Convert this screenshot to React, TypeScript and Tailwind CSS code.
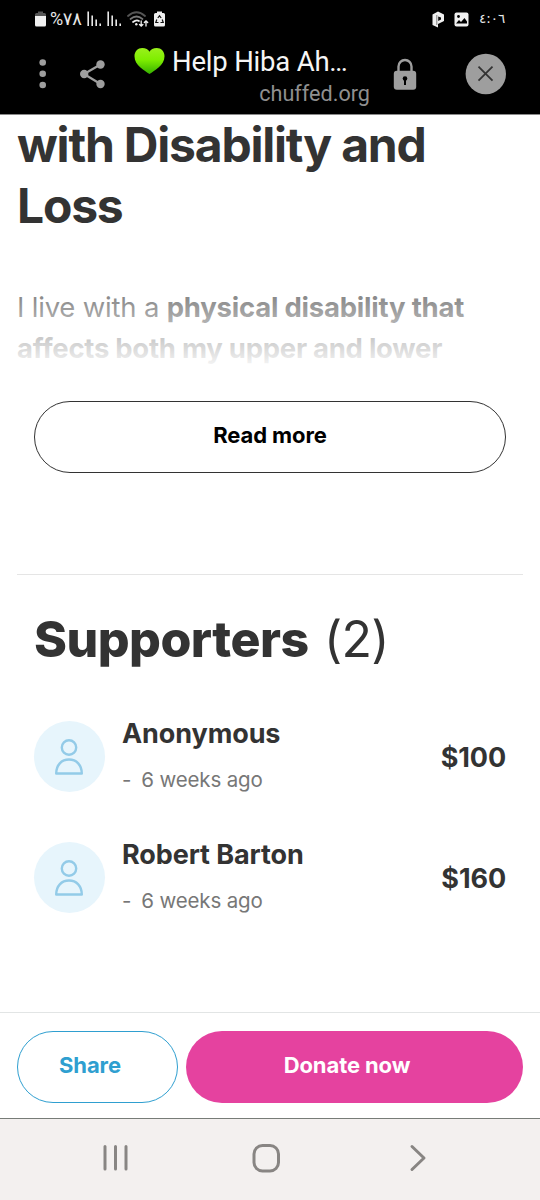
const SUPPORTERS = [
  { name: "Anonymous", when: "6 weeks ago", amount: "$100" },
  { name: "Robert Barton", when: "6 weeks ago", amount: "$160" },
];

function SignalIcon() {
  return (
    <svg width="15" height="16" viewBox="0 0 15 16" stroke="#e8e8e8" strokeWidth="1.6">
      <path d="M1.2 0.5V15M5.2 4.5V15M9.2 8.5V15M13.2 12.500V15" />
    </svg>
  );
}

function StatusBar() {
  return (
    <div className="flex h-[38px] items-center justify-between pr-[36px] pl-[35px] text-[#e8e8e8]">
      <div className="flex items-center">
        <svg width="11" height="16" viewBox="0 0 11 16">
          <path d="M3 0.500h5V2h1.500Q11 2 11 3.500V6H0V3.500Q0 2 1.500 2H3z" fill="#555" />
          <path d="M0 5h11v9q0 1.500-1.500 1.500h-8Q0 15.500 0 14z" fill="#f0f0f0" />
        </svg>
        <span className="ml-[4px] flex w-[31px] items-center font-[Roboto,'DejaVu_Sans',sans-serif] text-[18px] leading-none whitespace-nowrap">
          <span className="tracking-[-0.5px]">%</span>
          <span className="text-[18px] tracking-[-1px]">٧٨</span>
        </span>
        <div className="ml-[6px] flex gap-[5px]">
          <SignalIcon />
          <SignalIcon />
        </div>
        <svg className="ml-[5px]" width="22" height="17" viewBox="0 0 22 17" fill="none" strokeLinecap="round">
          <path d="M1 5Q9.500-2.500 18 5" stroke="#555" strokeWidth="1.800" />
          <path d="M3.500 8Q9.500 3 15.500 8" stroke="#777" strokeWidth="1.700" />
          <path d="M6 11q3.500-2.800 6 -1" stroke="#eee" strokeWidth="1.700" />
          <circle cx="9.300" cy="13.200" r="1.200" fill="#eee" />
          <path d="M14.200 10v5M12.500 13.500l1.700 1.700 1.700-1.700M19 15v-5M17.300 11.500L19 9.800l1.700 1.700" stroke="#eee" strokeWidth="1.300" />
        </svg>
        <svg className="ml-[5px]" width="11" height="16" viewBox="0 0 11 16">
          <path d="M3 0.500h5V2h1.500Q11 2 11 3.500V14q0 1.500-1.500 1.500h-8Q0 15.500 0 14V3.500Q0 2 1.500 2H3z" fill="#f0f0f0" />
          <path d="M3.800 7L5.500 4.800 7.200 7M8.200 8.500l1 3H6.500M4.500 11.500H1.800l1-3" fill="none" stroke="#111" strokeWidth="1.200" />
        </svg>
      </div>
      <div className="flex items-center">
        <svg width="13" height="17" viewBox="0 0 13 17">
          <path d="M0.500 3.500L6 0.500 12 3.500v6.500L6 13v3.500L0.500 14z" fill="#f0f0f0" />
          <path d="M4.800 4v10" fill="none" stroke="#666" strokeWidth="0.800" />
          <path d="M6.200 5.500L9 6.500v2L6.200 10z" fill="#111" />
        </svg>
        <svg className="ml-[9px]" width="15" height="15" viewBox="0 0 15 15">
          <rect x="0.500" y="0.500" width="14" height="14" rx="2" fill="#f0f0f0" />
          <circle cx="4.500" cy="4.500" r="1.400" fill="#000" />
          <path d="M2 11.500L5 8l2 2L10.500 6l2.500 3.500v2z" fill="#000" />
        </svg>
        <span className="ml-[10px] w-[25px] font-['DejaVu_Sans',sans-serif] text-[13.5px] leading-none whitespace-nowrap">
          ٤:٠٦
        </span>
      </div>
    </div>
  );
}

function BrowserBar() {
  return (
    <div className="flex h-[76px] items-start">
      <svg className="mt-[20px] ml-[38px]" width="10" height="32" viewBox="0 0 10 32" fill="#9e9e9e">
        <circle cx="4.700" cy="4.500" r="3.300" />
        <circle cx="4.700" cy="15.800" r="3.300" />
        <circle cx="4.700" cy="27" r="3.300" />
      </svg>
      <svg className="mt-[21px] ml-[31px]" width="28" height="30" viewBox="0 0 28 30" fill="#9e9e9e">
        <path d="M21.500 5.500L5 15l16.500 10" fill="none" stroke="#9e9e9e" strokeWidth="2.200" />
        <circle cx="21.500" cy="5.500" r="4.200" />
        <circle cx="5.200" cy="15" r="4.200" />
        <circle cx="21.500" cy="25" r="4.200" />
      </svg>
      <div className="ml-[27px] flex w-[236px] flex-col items-end">
        <div className="flex w-full items-start">
          <svg className="mt-[9px] shrink-0" width="31" height="28" viewBox="0 0 32 28">
            <defs>
              <linearGradient id="heart" x1="0" y1="0" x2="0" y2="1">
                <stop offset="0" stopColor="#9af01c" />
                <stop offset="0.450" stopColor="#7fee00" />
                <stop offset="1" stopColor="#35b000" />
              </linearGradient>
            </defs>
            <path
              d="M16 27.500C11 23.500 0.500 18.500 0.500 9C0.500 4 4 0.500 8.500 0.500C12 0.500 15 2 16 4.500C17 2 20 0.500 23.500 0.500C28 0.500 31.500 4 31.500 9C31.500 18.500 21 23.500 16 27.500Z"
              fill="url(#heart)"
            />
          </svg>
          <span className="mt-[8px] ml-[7px] font-[Roboto,sans-serif] text-[27.5px] leading-[32px] tracking-[-0.2px] whitespace-nowrap text-[#f5f5f5]">
            Help Hiba Ah…
          </span>
        </div>
        <span className="mt-[2px] font-[Roboto,sans-serif] text-[21.6px] leading-[28px] text-[#8f8f8f]">
          chuffed.org
        </span>
      </div>
      <svg className="mt-[20px] ml-[23px]" width="24" height="33" viewBox="0 0 24 33">
        <path d="M5.500 14V8.500a6.500 6.500 0 0 1 13 0V14" fill="none" stroke="#9e9e9e" strokeWidth="2.400" />
        <rect x="0.800" y="12.800" width="22.400" height="19" rx="3" fill="#9e9e9e" />
        <circle cx="12" cy="20.500" r="2.300" />
        <path d="M12 21v6" stroke="#000" strokeWidth="2" />
      </svg>
      <svg className="mt-[15px] ml-[48px]" width="42" height="42" viewBox="0 0 42 42">
        <circle cx="20.800" cy="21" r="20.200" fill="#9e9e9e" />
        <path d="M13.500 13.700l14 14M27.500 13.700l-14 14" stroke="#333" strokeWidth="1.800" />
      </svg>
    </div>
  );
}

function Avatar() {
  return (
    <div className="flex size-[71px] shrink-0 items-center justify-center rounded-full bg-[#e7f5fc]">
      <svg className="mr-[1px]" width="28" height="36" viewBox="0 0 28 36" fill="none" stroke="#93cbe8" strokeWidth="2.400" strokeLinejoin="round">
        <circle cx="14" cy="8.500" r="7.200" />
        <path d="M1.200 34.500C1.200 26 6.500 20.500 14 20.500S26.800 26 26.800 34.500Z" />
      </svg>
    </div>
  );
}

export default function App() {
  return (
    <div className="flex h-[1200px] w-[540px] flex-col overflow-hidden bg-white font-[Inter,sans-serif] text-[#333]">
      <header className="h-[115px] shrink-0 border-b border-[#8a8a8a] bg-black">
        <StatusBar />
        <BrowserBar />
      </header>

      <main className="flex-1 px-[17px]">
        <h1 className="-mt-[1px] text-[48px] leading-[61px] font-bold tracking-[-1.2px]">
          with Disability and
          <br />
          Loss
        </h1>
        <div className="relative mt-[51px] h-[85px] overflow-hidden text-[27.5px] leading-[41px] text-[#333]">
          <p className="tracking-[-0.2px]">
            I live with a{" "}
            <strong className="font-bold tracking-[-0.22px]">physical disability that</strong>
            <br />
            <strong className="font-bold tracking-[-0.27px]">affects both my upper and lower</strong>
          </p>
          <div className="absolute inset-0 bg-linear-to-b from-white/35 to-white" />
        </div>
        <div className="mt-[29px] px-[17px]">
          <button className="h-[72px] w-full rounded-full border-[1.5px] border-[#333] pb-[4px] text-[22px] font-bold tracking-[-0.1px] text-black">
            Read more
          </button>
        </div>

        <section className="mt-[101px] border-t border-[#e5e5e5] px-[17px]">
          <h2 className="mt-[34px] text-[50px] leading-[61px] font-extrabold tracking-[-0.53px]">
            Supporters <span className="ml-[5px] font-normal tracking-[-0.7px]">(2)</span>
          </h2>
          <ul className="mt-[51px] flex flex-col gap-[50px]">
            {SUPPORTERS.map((s) => (
              <li key={s.name} className="flex h-[71px] items-center">
                <Avatar />
                <div className="-mt-[3px] ml-[17px] flex-1">
                  <p className="text-[27px] leading-[40px] font-bold tracking-[-0.1px]">{s.name}</p>
                  <p className="mt-[10px] text-[20.5px] leading-[32px] tracking-[-0.15px] text-[#777]">
                    <span className="mr-[10px]">-</span>
                    {s.when}
                  </p>
                </div>
                <span className="mt-[3px] text-[27px] font-bold tracking-[-0.1px]">{s.amount}</span>
              </li>
            ))}
          </ul>
        </section>
      </main>

      <div className="flex h-[106px] shrink-0 gap-[8px] border-t border-[#e2e5e5] px-[17px] pt-[18px]">
        <button className="h-[72px] w-[161px] rounded-full border-[1.5px] border-[#2f9fd0] pr-[15px] pb-[4px] text-[22px] font-bold tracking-[-0.1px] text-[#2f9fd0]">
          Share
        </button>
        <button className="h-[72px] flex-1 rounded-full bg-[#e5429f] pr-[15px] pb-[4px] text-[22px] font-bold tracking-[-0.1px] text-white">
          Donate now
        </button>
      </div>

      <nav className="h-[82px] shrink-0 border-t border-[#777c77] bg-[#f3f0ef]">
        <svg width="540" height="81" viewBox="0 0 540 81" fill="none" stroke="#888583" strokeWidth="3" strokeLinecap="round">
          <path d="M105 27.500v22.500M115.500 27.500v22.500M126 27.500v22.500" />
          <rect x="254" y="26.500" width="24.500" height="25.500" rx="8.500" />
          <path d="M412 27.500L424 39 412 50.500" strokeLinejoin="round" />
        </svg>
      </nav>
    </div>
  );
}
